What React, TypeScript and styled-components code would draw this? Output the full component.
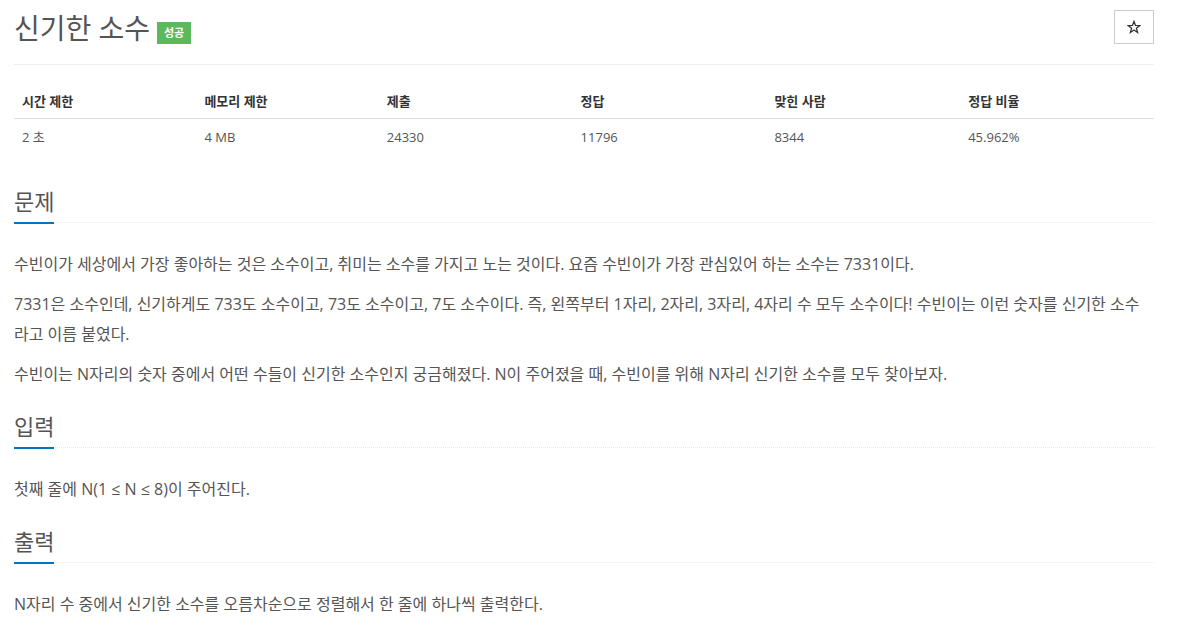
import styled, { createGlobalStyle } from "styled-components";
import { type ReactElement } from "react";

const GlobalStyle = createGlobalStyle`
  html, body {
    margin: 0;
    padding: 0;
    background: #fff;
  }
  body {
    font-family: "Open Sans", "Noto Sans CJK KR", sans-serif;
    color: #555;
  }
`;

const Page = styled.div`
  width: 1140px;
  padding: 0 42px 0 14px;
`;

const Header = styled.div`
  display: flex;
  justify-content: space-between;
  align-items: flex-start;
  padding: 10px 0 18px;
  border-bottom: 1px solid #eee;
`;

const Title = styled.h1`
  margin: 0;
  font-size: 28px;
  line-height: 36px;
  font-weight: 400;
  color: #555;
  display: flex;
  align-items: center;
`;

const Badge = styled.span`
  display: inline-flex;
  align-items: center;
  justify-content: center;
  margin: 10px 0 0 7px;
  width: 34px;
  height: 22px;
  background: #5cb85c;
  color: #fff;
  font-size: 11px;
  font-weight: 700;
`;

const StarButton = styled.button`
  width: 40px;
  height: 34px;
  padding: 0;
  background: #fff;
  border: 1px solid #ccc;
  display: flex;
  align-items: center;
  justify-content: center;
  color: #333;
`;

const InfoTable = styled.table`
  width: 100%;
  border-collapse: collapse;
  margin: 19px 0 20px;
  font-size: 13px;
  line-height: 18px;
`;

const HeadCell = styled.th<{ $w: number }>`
  width: ${(p) => p.$w}%;
  text-align: left;
  padding: 8px;
  font-weight: 700;
  color: #333;
  border-bottom: 1px solid #ddd;
`;

const Cell = styled.td`
  padding: 9px 8px 8px;
  color: #555;
`;

const Section = styled.section`
  padding-top: 13px;
`;

const Headline = styled.div`
  border-bottom: 1px dotted #e4e9f0;
  margin-bottom: 26px;
`;

const HeadlineText = styled.h2`
  display: inline-block;
  margin: 0 0 -2px;
  padding-bottom: 7px;
  font-size: 22px;
  line-height: 28px;
  font-weight: 400;
  color: #555;
  border-bottom: 2px solid #0076c0;
`;

const Paragraph = styled.p`
  margin: 0 0 10px;
  font-size: 16px;
  line-height: 30px;
  color: #555;
`;

const columns = [
  { label: "시간 제한", value: "2 초", w: 16 },
  { label: "메모리 제한", value: "4 MB", w: 16 },
  { label: "제출", value: "24330", w: 17 },
  { label: "정답", value: "11796", w: 17 },
  { label: "맞힌 사람", value: "8344", w: 17 },
  { label: "정답 비율", value: "45.962%", w: 17 },
];

const sections = [
  {
    title: "문제",
    body: [
      "수빈이가 세상에서 가장 좋아하는 것은 소수이고, 취미는 소수를 가지고 노는 것이다. 요즘 수빈이가 가장 관심있어 하는 소수는 7331이다.",
      "7331은 소수인데, 신기하게도 733도 소수이고, 73도 소수이고, 7도 소수이다. 즉, 왼쪽부터 1자리, 2자리, 3자리, 4자리 수 모두 소수이다! 수빈이는 이런 숫자를 신기한 소수라고 이름 붙였다.",
      "수빈이는 N자리의 숫자 중에서 어떤 수들이 신기한 소수인지 궁금해졌다. N이 주어졌을 때, 수빈이를 위해 N자리 신기한 소수를 모두 찾아보자.",
    ],
  },
  { title: "입력", body: ["첫째 줄에 N(1 ≤ N ≤ 8)이 주어진다."] },
  { title: "출력", body: ["N자리 수 중에서 신기한 소수를 오름차순으로 정렬해서 한 줄에 하나씩 출력한다."] },
];

function StarIcon(): ReactElement {
  return (
    <svg width="14" height="14" viewBox="0 0 24 24" fill="none" stroke="currentColor" strokeWidth="2.2" strokeLinejoin="miter">
      <path d="M12 2.5l2.6 6.9 7.2.3-5.7 4.5 2 7.1L12 17.2l-6.1 4.1 2-7.1-5.7-4.5 7.2-.3z" />
    </svg>
  );
}

export default function App(): ReactElement {
  return (
    <Page>
      <GlobalStyle />
      <Header>
        <Title>
          신기한 소수
          <Badge>성공</Badge>
        </Title>
        <StarButton aria-label="즐겨찾기">
          <StarIcon />
        </StarButton>
      </Header>
      <InfoTable>
        <thead>
          <tr>
            {columns.map((c) => (
              <HeadCell key={c.label} $w={c.w}>
                {c.label}
              </HeadCell>
            ))}
          </tr>
        </thead>
        <tbody>
          <tr>
            {columns.map((c) => (
              <Cell key={c.label}>{c.value}</Cell>
            ))}
          </tr>
        </tbody>
      </InfoTable>
      {sections.map((s) => (
        <Section key={s.title}>
          <Headline>
            <HeadlineText>{s.title}</HeadlineText>
          </Headline>
          {s.body.map((t) => (
            <Paragraph key={t}>{t}</Paragraph>
          ))}
        </Section>
      ))}
    </Page>
  );
}
